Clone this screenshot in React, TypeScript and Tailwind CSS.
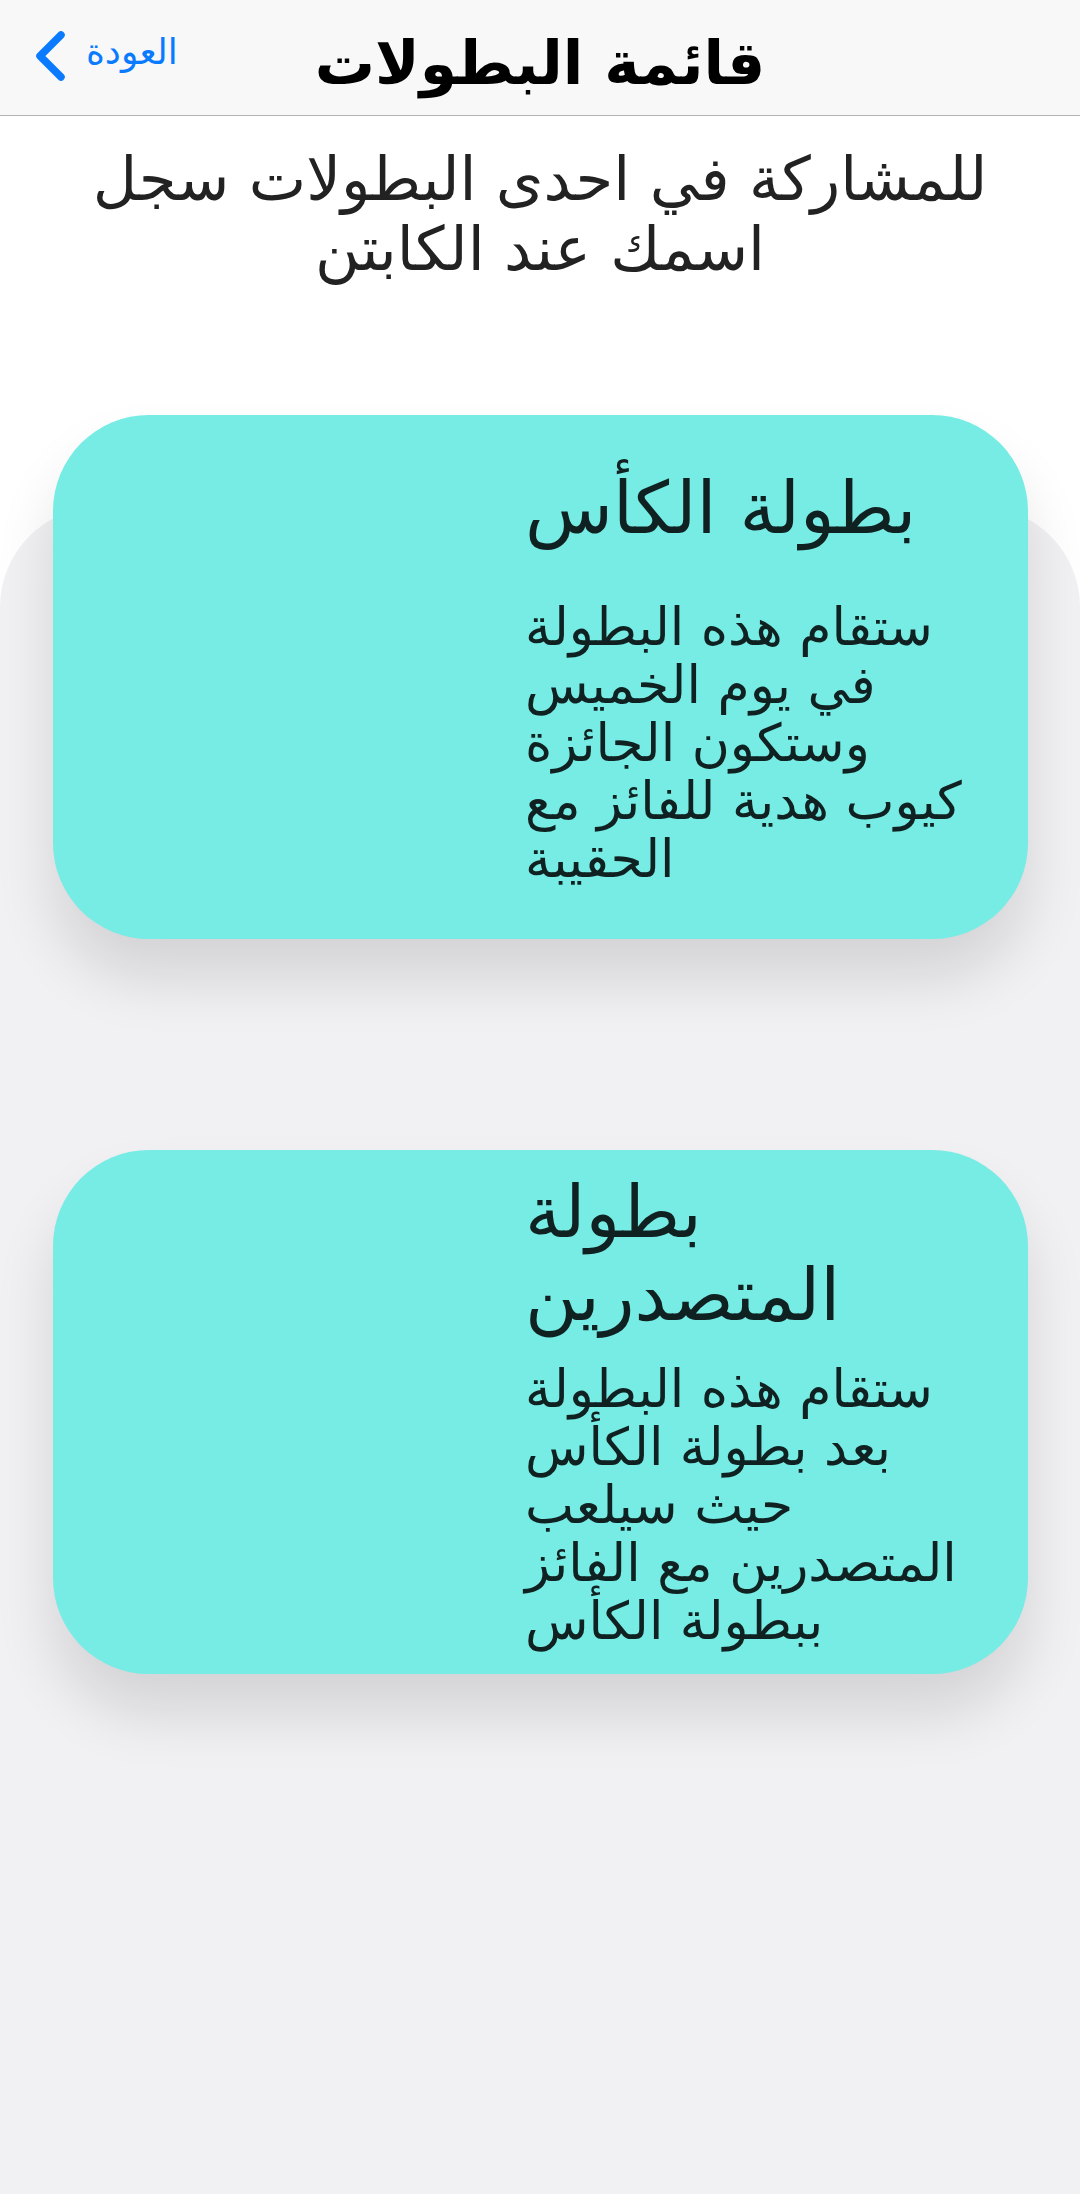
import React from "react"

const arabic = { fontFamily: '"DejaVu Sans", sans-serif' }

interface TournamentCardProps {
    title: string[]
    lines: string[]
    padTop: string
    gap: string
    className?: string
}

function TournamentCard({ title, lines, padTop, gap, className }: TournamentCardProps) {
    return (
        <div
            className={`ml-[53px] h-[524px] w-[975px] rounded-[96px] bg-[#76ece5] shadow-[0_40px_60px_rgba(0,0,0,0.12)] ${padTop} ${className ?? ""}`}
        >
            <div className="ml-[472px] flex flex-col items-start text-[#102121]">
                {title.map((t) => (
                    <div key={t} dir="rtl" className="whitespace-nowrap text-[72px] leading-[83px]">
                        {t}
                    </div>
                ))}
                <div className={`flex flex-col items-start ${gap}`}>
                    {lines.map((l) => (
                        <div key={l} dir="rtl" className="whitespace-nowrap text-[52px] leading-[58px]">
                            {l}
                        </div>
                    ))}
                </div>
            </div>
        </div>
    )
}

export default function App() {
    return (
        <div className="flex min-h-screen flex-col bg-white" style={arabic}>
            {/* شريط التنقل */}
            <div className="grid h-[116px] grid-cols-[1fr_auto_1fr] items-center border-b border-[#b3b3b3] bg-[#f8f8f8]">
                <div className="flex items-center gap-[18px] pl-[32px]">
                    <svg width="36" height="56" viewBox="0 0 36 56" className="-mt-[4px]">
                        <polyline
                            points="29,7 8,28 29,49"
                            fill="none"
                            stroke="#0a7bff"
                            strokeWidth="7.5"
                            strokeLinecap="round"
                            strokeLinejoin="round"
                        />
                    </svg>
                    <span dir="rtl" className="mb-[12px] text-[36px] text-[#0a7bff]">العودة</span>
                </div>
                <div dir="rtl" className="pt-[10px] text-[60px] font-bold text-black">قائمة البطولات</div>
                <div />
            </div>

            {/* العنوان الفرعي */}
            <div className="flex flex-col items-center pt-[28px] pb-[223px] text-[61px] leading-[70px] text-[#222222]">
                <div dir="rtl" className="whitespace-nowrap">للمشاركة في احدى البطولات سجل</div>
                <div dir="rtl" className="whitespace-nowrap">اسمك عند الكابتن</div>
            </div>

            {/* قائمة البطولات */}
            <div className="flex-1 rounded-t-[100px] bg-[#f1f0f3] pb-[300px]">
                <TournamentCard
                    className="-mt-[92px]"
                    padTop="pt-[52px]"
                    gap="mt-[48px]"
                    title={["بطولة الكأس"]}
                    lines={[
                        "ستقام هذه البطولة",
                        "في يوم الخميس",
                        "وستكون الجائزة",
                        "كيوب هدية للفائز مع",
                        "الحقيبة",
                    ]}
                />
                <TournamentCard
                    className="mt-[211px]"
                    padTop="pt-[21px]"
                    gap="mt-[23px]"
                    title={["بطولة", "المتصدرين"]}
                    lines={[
                        "ستقام هذه البطولة",
                        "بعد بطولة الكأس",
                        "حيث سيلعب",
                        "المتصدرين مع الفائز",
                        "ببطولة الكأس",
                    ]}
                />
            </div>
        </div>
    )
}
